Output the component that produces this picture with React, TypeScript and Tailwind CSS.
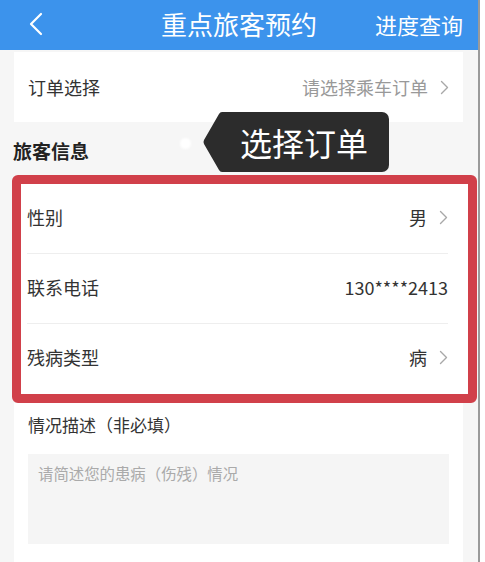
import React from 'react';

const FONT = { fontFamily: '"Noto Sans CJK SC", "Noto Sans", sans-serif' };

function Chevron() {
  return (
    <svg width="9" height="15" viewBox="0 0 9 15" className="shrink-0">
      <path d="M1.5 1.5 L7.5 7.5 L1.5 13.5" fill="none" stroke="#a8a8a8" strokeWidth="1.4" strokeLinecap="round" strokeLinejoin="round" />
    </svg>
  );
}

const ROWS = [
  { label: '性别', value: '男', arrow: true },
  { label: '联系电话', value: '130****2413', arrow: false },
  { label: '残病类型', value: '病', arrow: true },
];

export default function App() {
  return (
    <div className="flex h-[562px] w-[485px] overflow-hidden bg-white" style={FONT}>
      <div className="relative flex w-[480px] shrink-0 flex-col border-r-2 border-[#9a9a9a] bg-[#f6f6f6]">
        <header className="flex h-[50px] shrink-0 items-center bg-[#3c93ec] pb-[2px] text-white">
          <div className="flex w-[150px] items-center pl-[28px]">
            <svg width="16" height="24" viewBox="0 0 16 24">
              <path d="M13 2 L3 12 L13 22" fill="none" stroke="#fff" strokeWidth="2.2" strokeLinecap="round" strokeLinejoin="round" />
            </svg>
          </div>
          <h1 className="flex-1 text-center text-[26px] leading-none">重点旅客预约</h1>
          <div className="flex w-[150px] justify-end pr-[15px] text-[22px] leading-none">进度查询</div>
        </header>

        <div className="mx-[14px] mt-[2px] flex h-[70px] w-[449px] items-center justify-between bg-white px-[14px]">
          <span className="text-[18px] text-[#333]">订单选择</span>
          <span className="flex items-center gap-[12px] text-[18px] text-[#999]">
            请选择乘车订单
            <Chevron />
          </span>
        </div>

        <div className="flex h-[53px] items-center pl-[13px] pt-[5px] text-[19px] font-bold text-[#222]">旅客信息</div>

        <div className="ml-[12px] w-[465px] rounded-[6px] border-[9px] border-[#d1404a] bg-white">
          {ROWS.map((r) => (
            <div key={r.label} className="ml-[6px] mr-[20px] flex h-[70px] items-center justify-between border-[#eeeeee] pb-[3px] [&:not(:last-child)]:border-b">
              <span className="text-[18px] text-[#333]">{r.label}</span>
              <span className="flex items-center gap-[12px] text-[18px] text-[#333]">
                {r.value}
                {r.arrow && <Chevron />}
              </span>
            </div>
          ))}
        </div>

        <div className="mx-[14px] w-[449px] flex-1 bg-white px-[14px] pt-[10px]">
          <div className="text-[17px] leading-[24px] text-[#333]">情况描述（非必填）</div>
          <div className="mt-[17px] h-[90px] bg-[#f5f5f5] px-[10px] pt-[8px] text-[15.4px] text-[#aaa]">请简述您的患病（伤残）情况</div>
        </div>

        <div className="absolute left-[180px] top-[138px] h-[11px] w-[11px] rounded-full bg-white blur-[1px]" />
        <div className="absolute left-[203px] top-[112px] flex h-[60px]">
          <svg width="20" height="60" viewBox="0 0 20 60" className="block">
            <path d="M20 0 L19 0 Q17 0 16 2 L1 28 Q0 30 1 32 L16 58 Q17 60 19 60 L20 60 Z" fill="#2c2c2c" />
          </svg>
          <div className="flex w-[166px] items-center rounded-r-[7px] bg-[#2c2c2c] pl-[17px] text-[32px] leading-none text-white">选择订单</div>
        </div>
      </div>
    </div>
  );
}
